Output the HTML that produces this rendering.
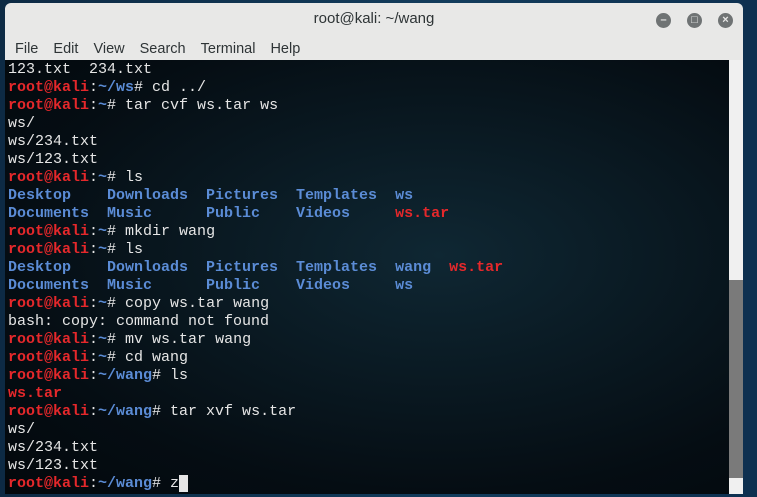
<!DOCTYPE html>
<html><head><style>
body{margin:0;width:757px;height:497px;overflow:hidden;background:linear-gradient(90deg,#0d2a44,#123c5c 60%,#0e3050);font-family:"Liberation Sans",sans-serif;position:relative}
.win{position:absolute;left:5px;top:3px;width:738px;height:491px;background:#e8e8e7;border-radius:6px 6px 0 0;overflow:hidden}
.title{position:absolute;left:0;right:0;top:0;height:33px;text-align:center;line-height:32px;font-size:15px;color:#2e3436}
.btn{position:absolute;top:10px;width:15px;height:15px;border-radius:50%;background:#6f7374;color:#e8e8e7;font-size:11px;line-height:15px;text-align:center;font-weight:bold}
.menu{position:absolute;top:33px;left:0;height:24px;font-size:14.5px;color:#2e3436;line-height:26px}
.menu span{margin-left:10px;margin-right:1px}
.term{position:absolute;left:0;top:57px;width:724px;height:434px;background:radial-gradient(ellipse at 60% 45%,#0f2733,#050d13 70%,#03080c);}
pre{margin:0;position:absolute;left:3px;top:1px;font-family:"Liberation Mono",monospace;font-size:15px;line-height:18px;color:#e6e6e6}
.r{color:#e5282b;font-weight:bold}.b{color:#5b8cd6;font-weight:bold}
.sb{position:absolute;left:724px;top:57px;width:14px;height:434px;background:#f0f0f0}
.thumb{position:absolute;left:0;top:220px;width:14px;height:198px;background:#7a7a7a}
</style></head><body>
<div class="win">
<div class="title">root@kali: ~/wang</div>
<div class="btn" style="left:651px">&#8211;</div><div class="btn" style="left:682px">&#9633;</div><div class="btn" style="left:713px">&#215;</div>
<div class="menu"><span>File</span> <span>Edit</span> <span>View</span> <span>Search</span> <span>Terminal</span> <span>Help</span></div>
<div class="term"><pre>123.txt  234.txt
<span class="r">root@kali</span>:<span class="b">~/ws</span># cd ../
<span class="r">root@kali</span>:<span class="b">~</span># tar cvf ws.tar ws
ws/
ws/234.txt
ws/123.txt
<span class="r">root@kali</span>:<span class="b">~</span># ls
<span class="b">Desktop    Downloads  Pictures  Templates  ws</span>
<span class="b">Documents  Music      Public    Videos</span>     <span class="r">ws.tar</span>
<span class="r">root@kali</span>:<span class="b">~</span># mkdir wang
<span class="r">root@kali</span>:<span class="b">~</span># ls
<span class="b">Desktop    Downloads  Pictures  Templates  wang</span>  <span class="r">ws.tar</span>
<span class="b">Documents  Music      Public    Videos     ws</span>
<span class="r">root@kali</span>:<span class="b">~</span># copy ws.tar wang
bash: copy: command not found
<span class="r">root@kali</span>:<span class="b">~</span># mv ws.tar wang
<span class="r">root@kali</span>:<span class="b">~</span># cd wang
<span class="r">root@kali</span>:<span class="b">~/wang</span># ls
<span class="r">ws.tar</span>
<span class="r">root@kali</span>:<span class="b">~/wang</span># tar xvf ws.tar
ws/
ws/234.txt
ws/123.txt
<span class="r">root@kali</span>:<span class="b">~/wang</span># z<span style="background:#e6e6e6"> </span></pre></div>
<div class="sb"><div class="thumb"></div></div>
</div>
</body></html>
